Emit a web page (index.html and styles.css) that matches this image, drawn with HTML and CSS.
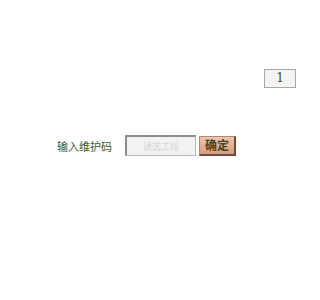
FILE: index.html
```html
<!DOCTYPE html>
<html>
<head>
<meta charset="utf-8">
<link rel="stylesheet" href="styles.css">
</head>
<body>
<div class="page">
  <div class="top">
    <div class="page-no">1</div>
  </div>
  <div class="form">
    <span class="label">输入维护码</span>
    <input class="code" type="text" placeholder="请选工段">
    <button class="ok">确定</button>
  </div>
</div>
</body>
</html>
```
FILE: styles.css
```css
html, body {
  margin: 0;
  padding: 0;
  background: #ffffff;
}
.page {
  width: 300px;
  height: 300px;
  font-family: "Noto Sans CJK SC", "Noto Sans", sans-serif;
}
.top {
  display: flex;
  justify-content: flex-end;
  padding-top: 69px;
  padding-right: 4px;
}
.page-no {
  box-sizing: border-box;
  width: 32px;
  height: 19px;
  border: 1px solid #a8a8a8;
  background: #f4f4f4;
  color: #3a4a30;
  font-family: "DejaVu Serif", serif;
  font-size: 12px;
  line-height: 17px;
  text-align: center;
}
.form {
  display: flex;
  align-items: center;
  margin-top: 47px;
  padding-left: 57px;
}
.label {
  font-size: 11px;
  color: #3d5a2c;
  line-height: 20px;
  margin-right: 13px;
}
.code {
  box-sizing: border-box;
  width: 71px;
  height: 21px;
  margin: 0;
  padding: 0 6px;
  border: 1px solid #b8b8b8;
  border-top: 2px solid #8c8c8c;
  border-left: 2px solid #8c8c8c;
  background: #f2f2f2;
  font-family: "Noto Sans CJK SC", sans-serif;
  font-size: 9px;
  text-align: center;
  outline: none;
}
.code::placeholder {
  color: #d4d4d4;
}
.ok {
  box-sizing: border-box;
  width: 37px;
  height: 20px;
  margin: 0 0 0 3px;
  padding: 0;
  border: 1px solid #b08a78;
  border-right: 2px solid #6a4a3a;
  border-bottom: 2px solid #6a4a3a;
  background: linear-gradient(#f0c4ad, #dc9c80);
  color: #3c4424;
  font-family: "Noto Sans CJK SC", sans-serif;
  font-size: 12px;
  font-weight: bold;
  line-height: 16px;
}
```
